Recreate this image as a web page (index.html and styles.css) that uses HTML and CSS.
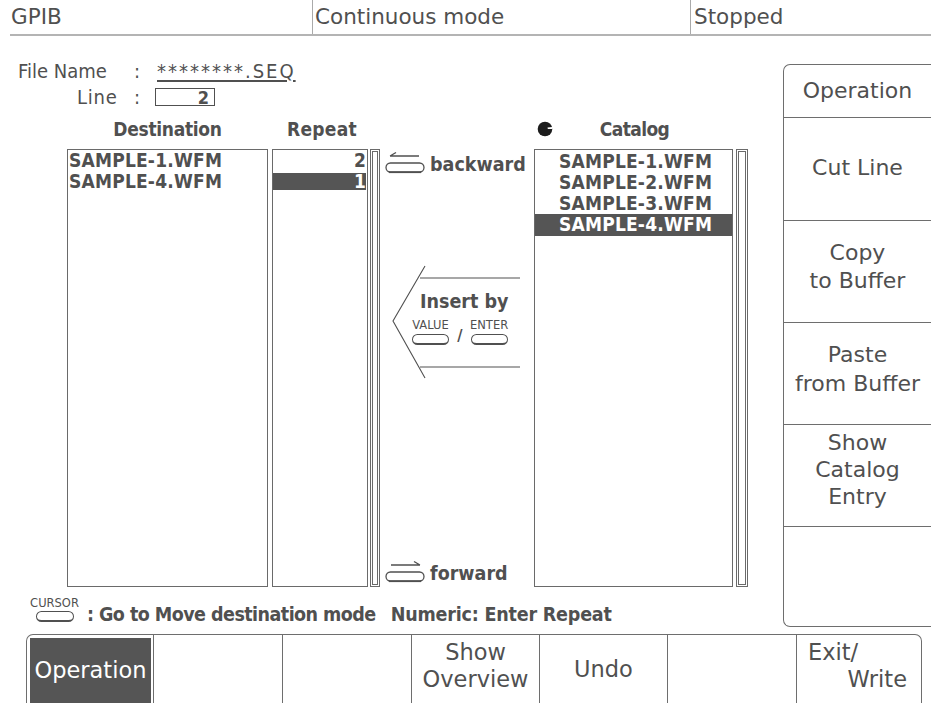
FILE: index.html
```html
<!DOCTYPE html>
<html>
<head>
<meta charset="utf-8">
<link rel="stylesheet" href="styles.css">
</head>
<body>
<div class="screen">
  <header class="status">
    <div class="status-cell status-gpib">GPIB</div>
    <div class="status-cell status-mode">Continuous mode</div>
    <div class="status-cell status-state">Stopped</div>
  </header>

  <div class="body">
    <main class="work">
      <div class="fl-row">
        <span class="fl-label">File Name</span>
        <span class="fl-colon">:</span>
        <span class="fl-value">********.SEQ</span>
      </div>
      <div class="fl-row fl-row-line">
        <span class="fl-label fl-label-line">Line</span>
        <span class="fl-colon">:</span>
        <span class="line-box">2</span>
      </div>

      <div class="col-heads">
        <div class="head head-dest">Destination</div>
        <div class="head head-repeat">Repeat</div>
        <div class="head head-catalog">
          <svg class="knob" width="16" height="16" viewBox="0 0 16 16">
            <circle cx="8" cy="8" r="7.3" fill="#1c1c1c"/>
            <path d="M10.5 6.6 L15.4 5.9 L15.5 8.1 L10.8 8.1 Z" fill="#fff"/>
          </svg>
          <span class="head-catalog-text">Catalog</span>
        </div>
      </div>

      <div class="lists">
        <div class="listbox dest">
          <div class="row">SAMPLE-1.WFM</div>
          <div class="row">SAMPLE-4.WFM</div>
        </div>
        <div class="listbox repeat">
          <div class="row">2</div>
          <div class="row sel">1</div>
        </div>
        <div class="scroll scroll-repeat"><div class="scroll-inner"></div></div>

        <div class="mid">
          <div class="dir">
            <svg class="dir-icon" width="42" height="24" viewBox="0 0 42 24">
              <path d="M5 5H34 M5 5L11 1.5" stroke="#505050" stroke-width="1.4" fill="none"/>
              <rect x="1" y="12" width="38" height="9" rx="4.5" fill="none" stroke="#505050" stroke-width="1.3"/>
              <path d="M4 21.3H36" stroke="#505050" stroke-width="1.6"/>
            </svg>
            <span class="dir-text">backward</span>
          </div>

          <div class="insert">
            <svg class="chev" width="154" height="116" viewBox="0 0 154 116">
              <path d="M40 14H140 M40 103H140 M45 2L13 57L45 114" stroke="#505050" stroke-width="1.1" fill="none"/>
            </svg>
            <div class="insert-text">
              <div class="insert-title">Insert by</div>
              <div class="insert-keys">
                <span class="keycap"><span class="keylabel">VALUE</span><span class="pill"></span></span>
                <span class="slash">/</span>
                <span class="keycap"><span class="keylabel">ENTER</span><span class="pill"></span></span>
              </div>
            </div>
          </div>

          <div class="dir dir-forward">
            <svg class="dir-icon" width="42" height="24" viewBox="0 0 42 24">
              <path d="M6 5H35 M35 5L29 1.5" stroke="#505050" stroke-width="1.4" fill="none"/>
              <rect x="1" y="12" width="38" height="9" rx="4.5" fill="none" stroke="#505050" stroke-width="1.3"/>
              <path d="M4 21.3H36" stroke="#505050" stroke-width="1.6"/>
            </svg>
            <span class="dir-text">forward</span>
          </div>
        </div>

        <div class="listbox catalog">
          <div class="row">SAMPLE-1.WFM</div>
          <div class="row">SAMPLE-2.WFM</div>
          <div class="row">SAMPLE-3.WFM</div>
          <div class="row sel">SAMPLE-4.WFM</div>
        </div>
        <div class="scroll scroll-catalog"><div class="scroll-inner"></div></div>
      </div>

      <div class="hint">
        <span class="keycap keycap-cursor"><span class="keylabel">CURSOR</span><span class="pill pill-cursor"></span></span>
        <span class="hint-text">: Go to Move destination mode</span>
        <span class="hint-text hint-numeric">Numeric: Enter Repeat</span>
      </div>
    </main>

    <aside class="side">
      <div class="side-item side-op">Operation</div>
      <div class="side-item side-cut">Cut Line</div>
      <div class="side-item side-multi side-copy">Copy<br>to Buffer</div>
      <div class="side-item side-multi">Paste<br>from Buffer</div>
      <div class="side-item side-multi side-three">Show<br>Catalog<br>Entry</div>
      <div class="side-item side-last"></div>
    </aside>
  </div>

  <footer class="softkeys">
    <div class="sk sk-active"><div class="sk-hl">Operation</div></div>
    <div class="sk"></div>
    <div class="sk"></div>
    <div class="sk sk-two">Show<br>Overview</div>
    <div class="sk">Undo</div>
    <div class="sk"></div>
    <div class="sk sk-exit"><span class="exit-1">Exit/</span><span class="exit-2">Write</span></div>
  </footer>
</div>
</body>
</html>
```

FILE: styles.css
```css
* { box-sizing: border-box; }
html, body { margin: 0; padding: 0; background: #fff; }
body {
  width: 931px;
  height: 703px;
  overflow: hidden;
  color: #505050;
  font-family: "DejaVu Sans Condensed", "DejaVu Sans", sans-serif;
  font-stretch: condensed;
}
.screen { display: flex; flex-direction: column; height: 703px; }

/* status bar */
.status {
  display: flex;
  height: 36px;
  margin-left: 10px;
  border-bottom: 2px solid #b4b4b4;
  font-family: "DejaVu Sans", sans-serif;
  font-stretch: normal;
  font-size: 21.5px;
  line-height: 34px;
}
.status-gpib { width: 302px; padding-left: 1px; }
.status-mode { width: 378px; border-left: 1px solid #aaa; padding-left: 2px; }
.status-state { flex: 1; border-left: 1px solid #aaa; padding-left: 3px; }

.body { display: flex; height: 598px; }

/* work area */
.work { width: 783px; display: flex; flex-direction: column; }

.fl-row {
  display: flex;
  align-items: center;
  height: 22px;
  margin-top: 24px;
  font-size: 20px;
}
.fl-row-line { margin-top: 4px; }
.fl-label { width: 134px; padding-left: 18px; }
.fl-label-line { padding-left: 77px; letter-spacing: 0.8px; }
.fl-colon { width: 23px; }
.fl-value {
  text-decoration: underline;
  text-underline-offset: 2px;
  font-size: 20px;
  letter-spacing: 2px;
}
.line-box {
  width: 60px;
  height: 18px;
  margin-left: -2px;
  border: 1px solid #505050;
  text-align: right;
  padding-right: 5px;
  font-weight: bold;
  font-size: 18px;
  line-height: 17px;
}

.col-heads {
  display: flex;
  align-items: center;
  height: 23px;
  margin-top: 9px;
  font-weight: bold;
  font-size: 19px;
  letter-spacing: -0.3px;
}
.head-dest { margin-left: 67px; width: 201px; text-align: center; }
.head-repeat { margin-left: 4px; width: 100px; text-align: center; letter-spacing: 0.3px; }
.head-catalog { margin-left: 163px; width: 199px; display: flex; align-items: center; padding-left: 2px; }
.knob { flex: none; }
.head-catalog-text { flex: 1; text-align: center; padding-right: 18px; letter-spacing: -0.6px; }

/* lists */
.lists {
  display: flex;
  height: 438px;
  margin-top: 9px;
  padding-left: 67px;
  font-weight: bold;
  font-size: 19px;
}
.listbox { border: 1px solid #6a6a6a; height: 100%; letter-spacing: 0.2px; }
.dest { width: 201px; padding: 2px 0 0 1px; }
.repeat { width: 96px; margin-left: 4px; padding: 2px 1px 0 0; text-align: right; }
.dest .row, .repeat .row { height: 17px; line-height: 17px; margin-bottom: 4px; }
.row.sel { background: #555; color: #fff; }
.catalog { width: 199px; padding-top: 1px; }
.catalog .row { height: 21px; line-height: 21px; padding-left: 24px; }
.catalog .row.sel { height: 22px; }

.scroll {
  height: 100%;
  border: 1px solid #6a6a6a;
  padding: 1px;
}
.scroll-inner { height: 100%; border: 1px solid #6a6a6a; }
.scroll-repeat { width: 10px; margin-left: 2px; }
.scroll-catalog { width: 12px; margin-left: 3px; }

.mid {
  width: 154px;
  display: flex;
  flex-direction: column;
  font-size: 19.5px;
}
.dir { display: flex; align-items: center; height: 26px; padding-left: 5px; margin-top: 1px; }
.dir-icon { flex: none; }
.dir-text { margin-left: 3px; padding-top: 3px; }
.dir-forward { margin-top: auto; margin-bottom: 2px; }

.insert { display: grid; margin-top: 88px; height: 116px; }
.insert > * { grid-area: 1 / 1; }
.insert-text { padding: 26px 0 0 32px; }
.insert-title { padding-left: 8px; height: 24px; line-height: 24px; }
.insert-keys { display: flex; align-items: flex-end; margin-top: 6px; }
.keycap { display: flex; flex-direction: column; align-items: center; }
.keylabel {
  font-family: "DejaVu Sans", sans-serif;
  font-stretch: normal;
  font-size: 11.5px;
  font-weight: normal;
  line-height: 11px;
}
.pill {
  display: block;
  width: 37px;
  height: 11px;
  margin-top: 3px;
  border: 1.3px solid #505050;
  border-bottom-width: 2.4px;
  border-radius: 6px;
}
.slash {
  width: 10px;
  margin: 0 5px 1px 6px;
  font-size: 16px;
  line-height: 16px;
  font-weight: bold;
  text-align: center;
}

/* hint */
.hint {
  display: flex;
  align-items: flex-end;
  height: 40px;
  padding-left: 30px;
  font-weight: bold;
  font-size: 19.5px;
}
.keycap-cursor { width: 49px; margin-bottom: 5px; }
.pill-cursor { width: 38px; height: 11px; margin-top: 2px; }
.hint-text { margin-left: 8px; line-height: 24px; letter-spacing: -0.55px; }
.hint-numeric { margin-left: 15px; letter-spacing: -0.2px; }

/* side menu */
.side {
  width: 148px;
  height: 563px;
  margin-top: 28px;
  border: 1px solid #6e6e6e;
  border-right: none;
  border-radius: 7px 0 0 7px;
  display: flex;
  flex-direction: column;
  font-family: "DejaVu Sans", sans-serif;
  font-stretch: normal;
  font-size: 22px;
  line-height: 29px;
}
.side-item {
  display: flex;
  align-items: center;
  justify-content: center;
  text-align: center;
  height: 102px;
  flex: none;
  border-bottom: 1px solid #6e6e6e;
}
.side-op { height: 53px; padding-bottom: 2px; }
.side-cut { height: 103px; padding-bottom: 3px; }
.side-multi { padding-bottom: 10px; }
.side-copy { line-height: 28px; }
.side-three { line-height: 27px; padding-bottom: 12px; }
.side-last { flex: 1; border-bottom: none; }

/* soft keys */
.softkeys {
  display: grid;
  grid-template-columns: 127px 129px 129px 128px 128px 129px 1fr;
  height: 69px;
  margin: 0 9px 0 26px;
  border: 1px solid #6e6e6e;
  border-bottom: none;
  border-radius: 7px 7px 0 0;
  font-family: "DejaVu Sans", sans-serif;
  font-stretch: normal;
  font-size: 22.5px;
  line-height: 27px;
}
.sk {
  border-right: 1px solid #6e6e6e;
  display: flex;
  align-items: center;
  justify-content: center;
  text-align: center;
}
.sk:last-child { border-right: none; }
.sk-active { padding: 3px 2px 0 3px; align-items: stretch; }
.sk-hl {
  flex: 1;
  background: #555;
  color: #fff;
  display: flex;
  align-items: center;
  justify-content: center;
}
.sk-two { padding-bottom: 6px; }
.sk-exit {
  flex-direction: column;
  align-items: stretch;
  justify-content: center;
  text-align: left;
  padding: 0 14px 6px 11px;
}
.exit-2 { text-align: right; }
```
